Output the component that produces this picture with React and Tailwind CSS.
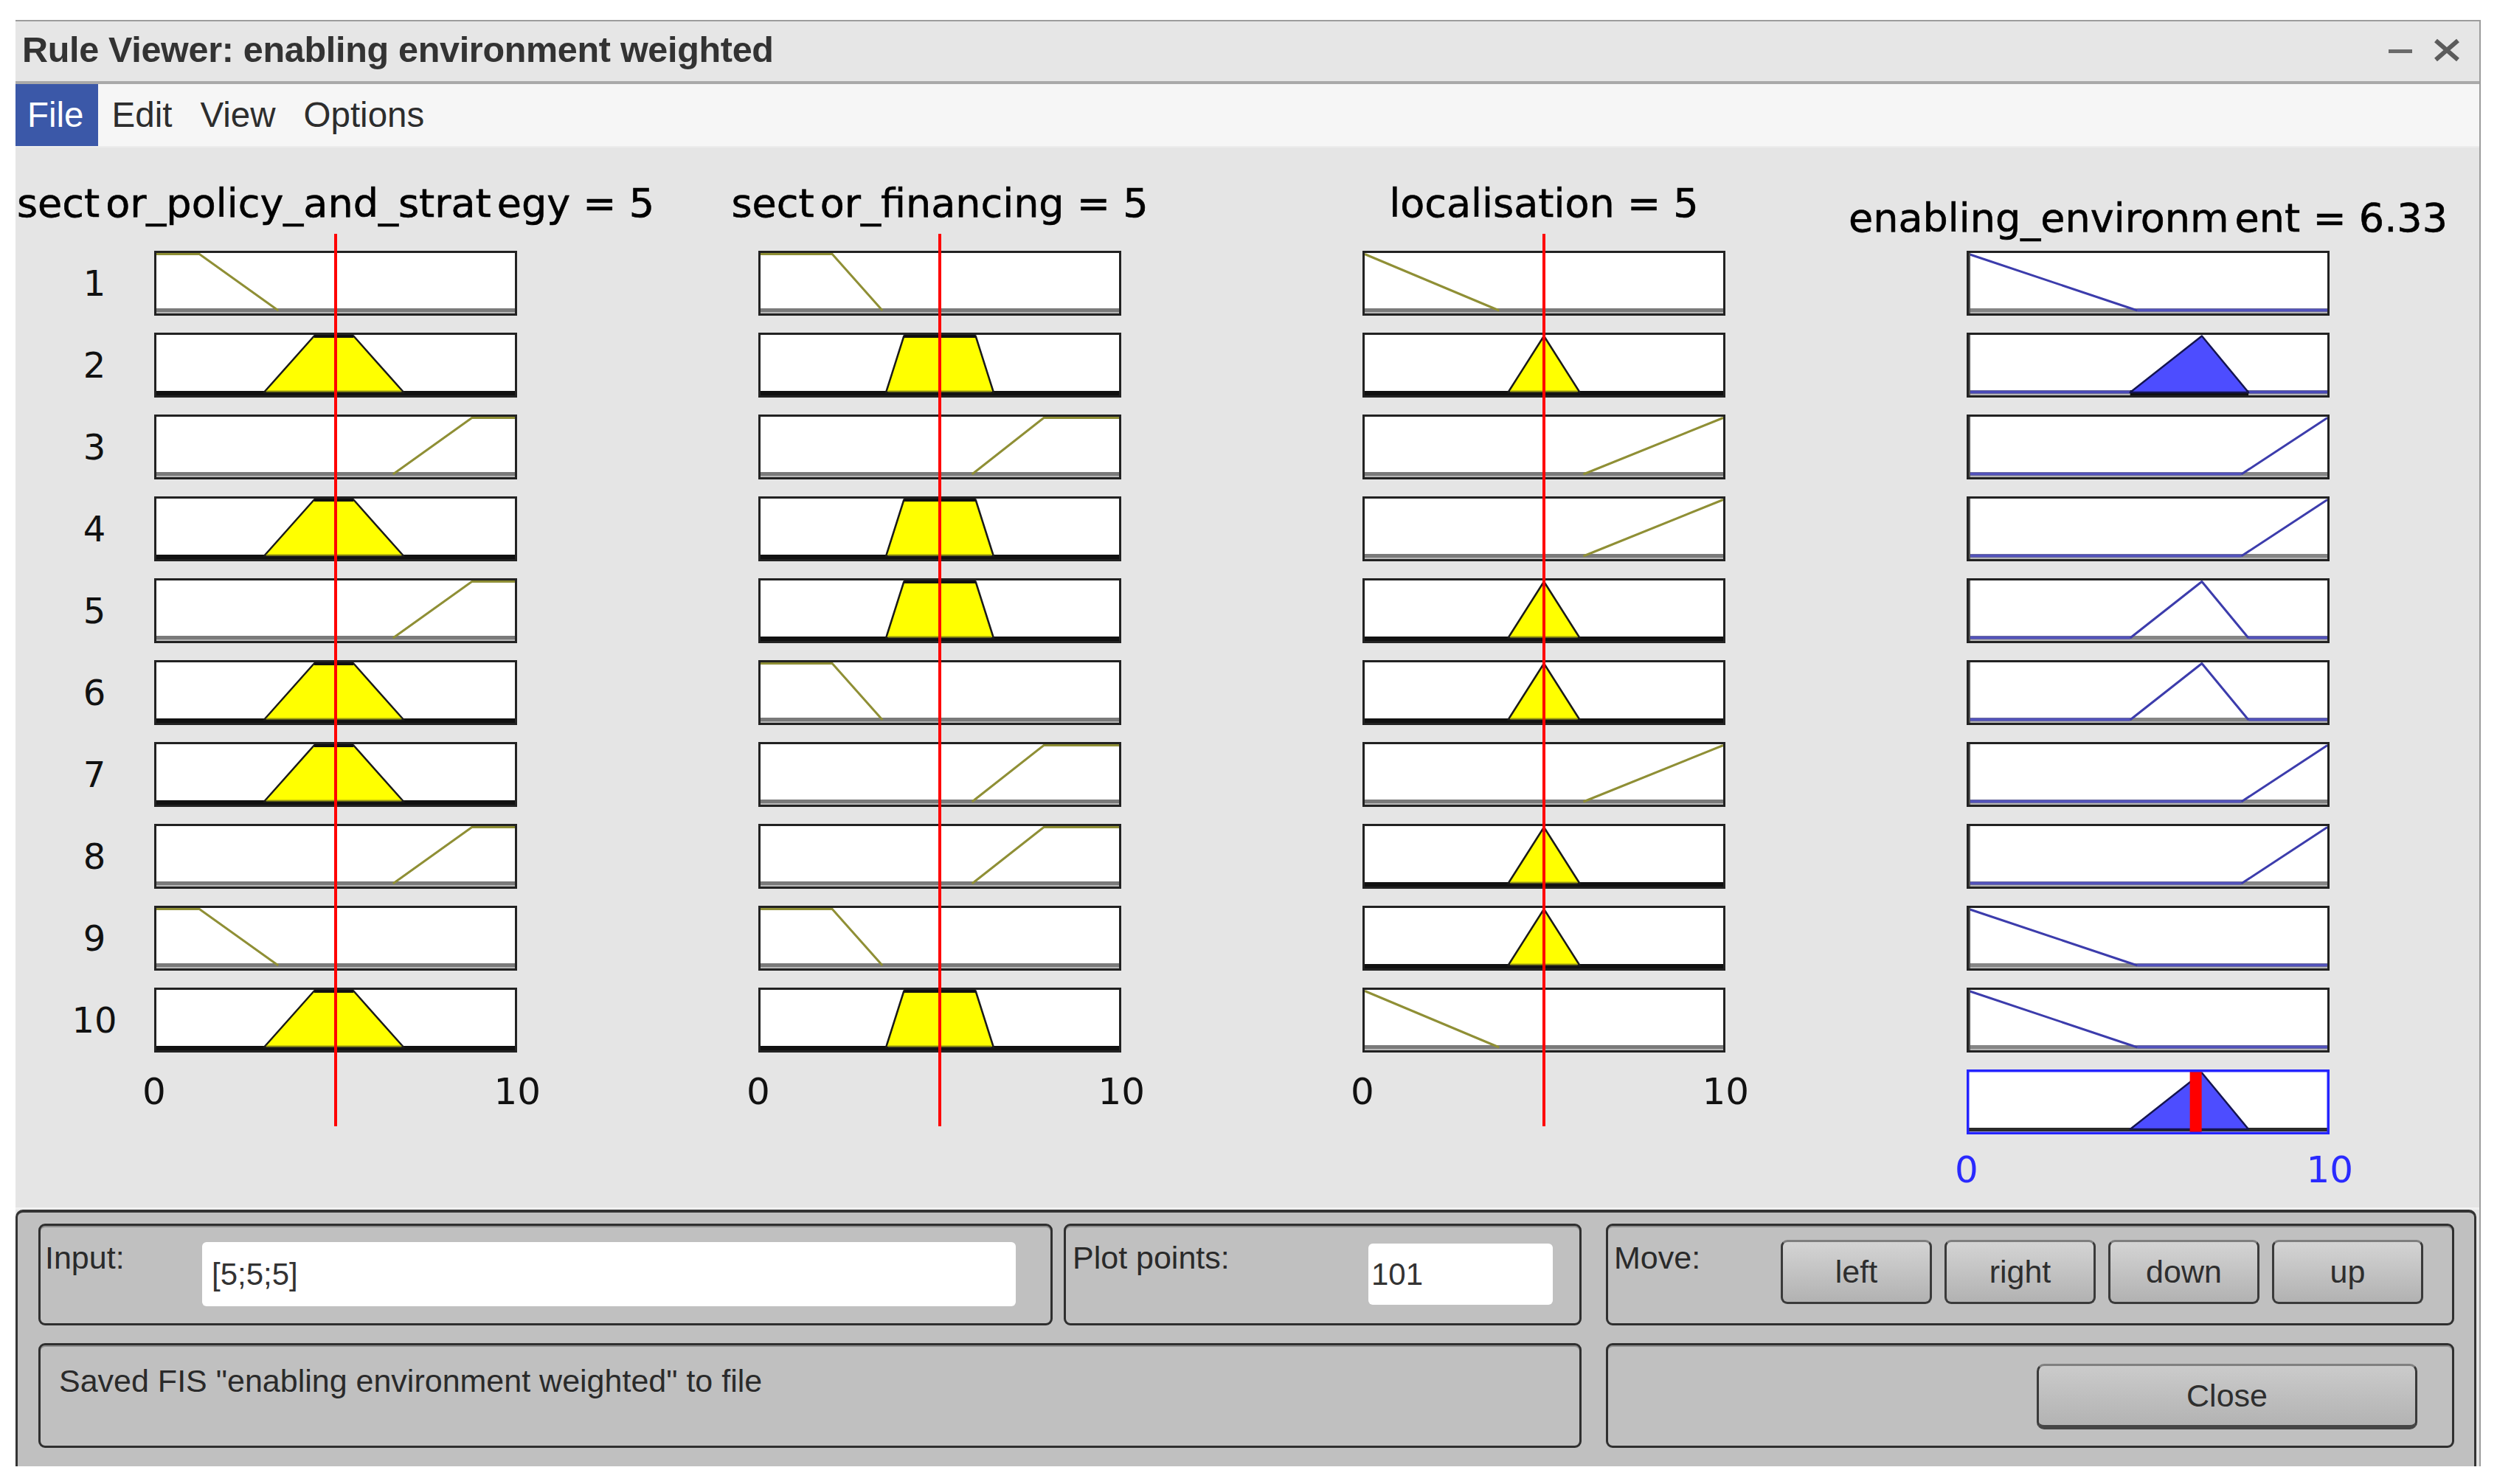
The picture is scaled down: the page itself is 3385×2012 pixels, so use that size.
import React from "react";

const X = (v) => 3 + v * 48.6;
const Y = (m) => 81 - m * 76.5;

const MF = {
  c1: { low: [[0, 1], [1.2, 1], [3.4, 0]], mid: [[3, 0], [4.4, 1], [5.5, 1], [6.9, 0]], high: [[6.6, 0], [8.8, 1], [10, 1]] },
  c2: { low: [[0, 1], [2, 1], [3.4, 0]], mid: [[3.5, 0], [4, 1], [6, 1], [6.5, 0]], high: [[5.9, 0], [7.9, 1], [10, 1]] },
  c3: { low: [[0, 1], [3.75, 0]], mid: [[4, 0], [5, 1], [6, 0]], high: [[6.1, 0], [10, 1]] },
  out: { low: [[0, 1], [4.7, 0]], mid: [[4.5, 0], [6.5, 1], [7.8, 0]], high: [[7.6, 0], [10, 1]] },
};

const rules = [
  ["low", "low", "low", "low"],
  ["mid", "mid", "mid", "mid"],
  ["high", "high", "high", "high"],
  ["mid", "mid", "high", "high"],
  ["high", "mid", "mid", "mid"],
  ["mid", "low", "mid", "mid"],
  ["mid", "high", "high", "high"],
  ["high", "high", "mid", "high"],
  ["low", "low", "mid", "low"],
  ["mid", "mid", "low", "low"],
];

const toPts = (pts) => pts.map(([v, m]) => `${X(v)},${Y(m)}`).join(" ");

function InPlot({ pts, fire }) {
  const tops = pts.filter((p) => p[1] === 1);
  return (
    <svg width="492" height="88" className="block">
      <rect width="492" height="88" fill="#ffffff" />
      {fire ? (
        <>
          <rect x="3" y="79" width="486" height="6" fill="#111111" />
          <polygon points={toPts(pts)} fill="#ffff00" stroke="#1a1a1a" strokeWidth="2.5" strokeLinejoin="round" />
          <line x1={X(pts[0][0]) + 3} y1="79.5" x2={X(pts[pts.length - 1][0]) - 3} y2="79.5" stroke="#9a9a10" strokeWidth="2" />
          {tops.length === 2 && (
            <line x1={X(tops[0][0])} y1="4.5" x2={X(tops[1][0])} y2="4.5" stroke="#111111" strokeWidth="5" />
          )}
        </>
      ) : (
        <>
          <rect x="3" y="78" width="486" height="5" fill="#7a7a7a" />
          <rect x="3" y="83" width="486" height="2" fill="#b8b8b8" />
          <polyline points={toPts(pts)} fill="none" stroke="#8f8f35" strokeWidth="3" />
        </>
      )}
      <rect x="1.5" y="1.5" width="489" height="85" fill="none" stroke="#222222" strokeWidth="3" />
    </svg>
  );
}

function OutPlot({ pts, fire }) {
  const z0 = pts[0][1] === 0 ? pts[0][0] : null;
  const z1 = pts[pts.length - 1][1] === 0 ? pts[pts.length - 1][0] : null;
  return (
    <svg width="492" height="88" className="block">
      <rect width="492" height="88" fill="#ffffff" />
      <rect x="3" y="78" width="486" height="5" fill="#858585" />
      <rect x="3" y="83" width="486" height="2" fill="#b5b5b5" />
      {fire ? (
        <>
          <rect x={X(pts[0][0])} y="78" width={X(pts[pts.length - 1][0]) - X(pts[0][0])} height="7" fill="#111111" />
          {z0 !== null && <line x1="3" y1="80.5" x2={X(z0)} y2="80.5" stroke="#4a4ab8" strokeWidth="4" />}
          {z1 !== null && <line x1={X(z1)} y1="80.5" x2="489" y2="80.5" stroke="#4a4ab8" strokeWidth="4" />}
          <polygon points={toPts(pts)} fill="#4d4dff" stroke="#141450" strokeWidth="2.5" strokeLinejoin="round" />
        </>
      ) : (
        <>
          {z0 !== null && <line x1="3" y1="80.5" x2={X(z0)} y2="80.5" stroke="#5252bb" strokeWidth="4" />}
          {z1 !== null && <line x1={X(z1)} y1="80.5" x2="489" y2="80.5" stroke="#5252bb" strokeWidth="4" />}
          <polyline points={toPts(pts)} fill="none" stroke="#3c3cac" strokeWidth="3" strokeLinejoin="round" />
        </>
      )}
      <rect x="0" y="0" width="5" height="88" fill="#555555" />
      <rect x="1.5" y="1.5" width="489" height="85" fill="none" stroke="#222222" strokeWidth="3" />
    </svg>
  );
}

function AggPlot() {
  const pts = MF.out.mid;
  const xc = X(6.33);
  return (
    <svg width="492" height="88" className="block">
      <rect width="492" height="88" fill="#ffffff" />
      <rect x="3" y="79" width="486" height="5" fill="#2a2a2a" />
      <polygon points={toPts(pts)} fill="#4d4dff" stroke="#141450" strokeWidth="2.5" strokeLinejoin="round" />
      <rect x={xc - 8} y="3" width="16" height="82" fill="#ff0000" />
      <rect x="1.75" y="1.75" width="488.5" height="84.5" fill="none" stroke="#2424ff" strokeWidth="3.5" />
    </svg>
  );
}

function InputColumn({ header, colKey, idx }) {
  return (
    <div className="relative w-[492px] shrink-0">
      <div className="h-[140px] pt-[49px] flex justify-center whitespace-nowrap text-[54px] leading-[54px] text-black [-webkit-text-stroke:0.6px_black]">
        {header}
      </div>
      <div className="flex flex-col gap-[23px]">
        {rules.map((r, i) => (
          <InPlot key={i} pts={MF[colKey][r[idx]]} fire={r[idx] === "mid"} />
        ))}
      </div>
      <div className="mt-[28px] -ml-[16px] -mr-[32px] flex justify-between text-[50px] leading-[50px] text-[#111]">
        <span>0</span>
        <span>10</span>
      </div>
      <div className="absolute left-[244px] top-[117px] w-[4px] h-[1210px] bg-[#ff0000]" />
    </div>
  );
}

function OutputColumn() {
  return (
    <div className="relative w-[492px] shrink-0">
      <div className="h-[140px] pt-[69px] flex justify-center whitespace-nowrap text-[54px] leading-[54px] text-black [-webkit-text-stroke:0.6px_black]">
        <span>enabling_environm</span>
        <span className="ml-[8px]">ent = 6.33</span>
      </div>
      <div className="flex flex-col gap-[23px]">
        {rules.map((r, i) => (
          <OutPlot key={i} pts={MF.out[r[3]]} fire={i === 1} />
        ))}
        <AggPlot />
      </div>
      <div className="mt-[23px] -ml-[16px] -mr-[32px] flex justify-between text-[50px] leading-[50px] text-[#2a2aff]">
        <span>0</span>
        <span>10</span>
      </div>
    </div>
  );
}

function Group({ className = "", children }) {
  return (
    <div
      className={`rounded-[9px] border-[3px] border-[#2f2f2f] bg-[#c0c0c0] shadow-[inset_0_2px_0_#8e8e8e] ${className}`}
    >
      {children}
    </div>
  );
}

function Btn({ children }) {
  return (
    <div className="w-[205px] h-[87px] rounded-[9px] border-[3px] border-[#3a3a3a] border-t-[#7e7e7e] bg-linear-to-b from-[#d4d4d4] to-[#b2b2b2] flex items-center justify-center text-[43px] text-[#2e2e2e]">
      {children}
    </div>
  );
}

export default function App() {
  return (
    <div className="w-[3385px] h-[2012px] bg-white pt-[27px] pl-[21px] font-['Liberation_Sans',Arial,sans-serif]">
      <div className="w-[3342px] h-[1961px] flex flex-col border-t-2 border-r-2 border-[#9c9c9c] bg-[#e6e6e6] overflow-hidden">
        {/* Title bar */}
        <div className="h-[81px] shrink-0 flex items-center justify-between bg-[#e6e6e6] pb-[4px]">
          <div className="pl-[9px] text-[48.5px] font-bold text-[#333333] tracking-[-0.3px]">
            Rule Viewer: enabling environment weighted
          </div>
          <div className="flex items-center gap-[28px] pr-[25px]">
            <div className="w-[32px] h-[5px] bg-[#6a6a6a] mt-[4px]" />
            <svg width="38" height="32" className="block">
              <path d="M4 3 L34 29 M34 3 L4 29" stroke="#5c5c5c" strokeWidth="6" />
            </svg>
          </div>
        </div>
        <div className="h-[4px] shrink-0 bg-[#a9a9a9]" />
        {/* Menu bar */}
        <div className="h-[86px] shrink-0 flex items-stretch bg-[#f6f6f6] text-[47.5px] text-[#2d2d2d] border-b-2 border-[#ececec]">
          <div className="flex items-center bg-[#3b58a8] text-white pl-[16px] pr-[19px]">File</div>
          <div className="flex items-center px-[19px]">Edit</div>
          <div className="flex items-center px-[19px]">View</div>
          <div className="flex items-center px-[19px]">Options</div>
        </div>
        {/* Main plots area */}
        <div className="h-[1440px] shrink-0 flex items-start bg-[#e5e5e5] border-b-[3px] border-[#f1f1f1] font-['DejaVu_Sans',sans-serif]">
          <div className="w-[188px] shrink-0 pl-[26px] pt-[140px] flex flex-col gap-[23px] text-[48px] text-[#111]">
            {rules.map((_, i) => (
              <div key={i} className="h-[88px] flex items-center justify-center">
                {i + 1}
              </div>
            ))}
          </div>
          <div className="flex gap-[327px]">
            <InputColumn
              colKey="c1"
              idx={0}
              header={
                <>
                  <span>sect</span>
                  <span className="ml-[8px]">or_policy_and_strat</span>
                  <span className="ml-[8px]">egy = 5</span>
                </>
              }
            />
            <InputColumn
              colKey="c2"
              idx={1}
              header={
                <>
                  <span>sect</span>
                  <span className="ml-[8px]">or_financing = 5</span>
                </>
              }
            />
            <InputColumn colKey="c3" idx={2} header={<span>localisation = 5</span>} />
            <OutputColumn />
          </div>
        </div>
        {/* Bottom panel */}
        <div className="flex-1 mr-[4px] bg-[#c0c0c0] border-t-[4px] border-l-[3px] border-r-[3px] border-[#333333] rounded-t-[10px] pl-[28px] pt-[15px] text-[43px] text-[#2a2a2a]">
          <div className="grid grid-cols-[2092px_1150px] grid-rows-[138px_142px] gap-x-[33px] gap-y-[24px]">
            <div className="flex gap-[15px]">
              <Group className="flex-1 flex items-start">
                <div className="w-[219px] shrink-0 pl-[6px] pt-[19px] leading-[49px]">Input:</div>
                <div className="flex-1 mr-[47px] mt-[22px] h-[87px] bg-white rounded-[6px] pl-[13px] flex items-center text-[42px] text-[#333]">
                  [5;5;5]
                </div>
              </Group>
              <Group className="w-[702px] shrink-0 flex items-start">
                <div className="pl-[9px] pt-[19px] leading-[49px]">Plot points:</div>
                <div className="ml-auto mr-[36px] mt-[24px] w-[250px] h-[83px] bg-white rounded-[6px] pl-[4px] flex items-center text-[42px] text-[#333]">
                  101
                </div>
              </Group>
            </div>
            <Group className="flex items-start">
              <div className="pl-[8px] pt-[19px] leading-[49px]">Move:</div>
              <div className="ml-auto mr-[39px] mt-[19px] flex gap-[17px]">
                <Btn>left</Btn>
                <Btn>right</Btn>
                <Btn>down</Btn>
                <Btn>up</Btn>
              </div>
            </Group>
            <Group className="">
              <div className="pl-[25px] pt-[24px] leading-[49px]">Saved FIS "enabling environment weighted" to file</div>
            </Group>
            <Group className="flex items-start">
              <div className="ml-auto mr-[47px] mt-[25px] w-[516px] h-[89px] rounded-[10px] border-[3px] border-[#3a3a3a] border-t-[#808080] border-b-[6px] border-b-[#454545] bg-linear-to-b from-[#cbcbcb] to-[#b3b3b3] flex items-center justify-center text-[43px] text-[#2e2e2e]">
                Close
              </div>
            </Group>
          </div>
        </div>
      </div>
    </div>
  );
}
